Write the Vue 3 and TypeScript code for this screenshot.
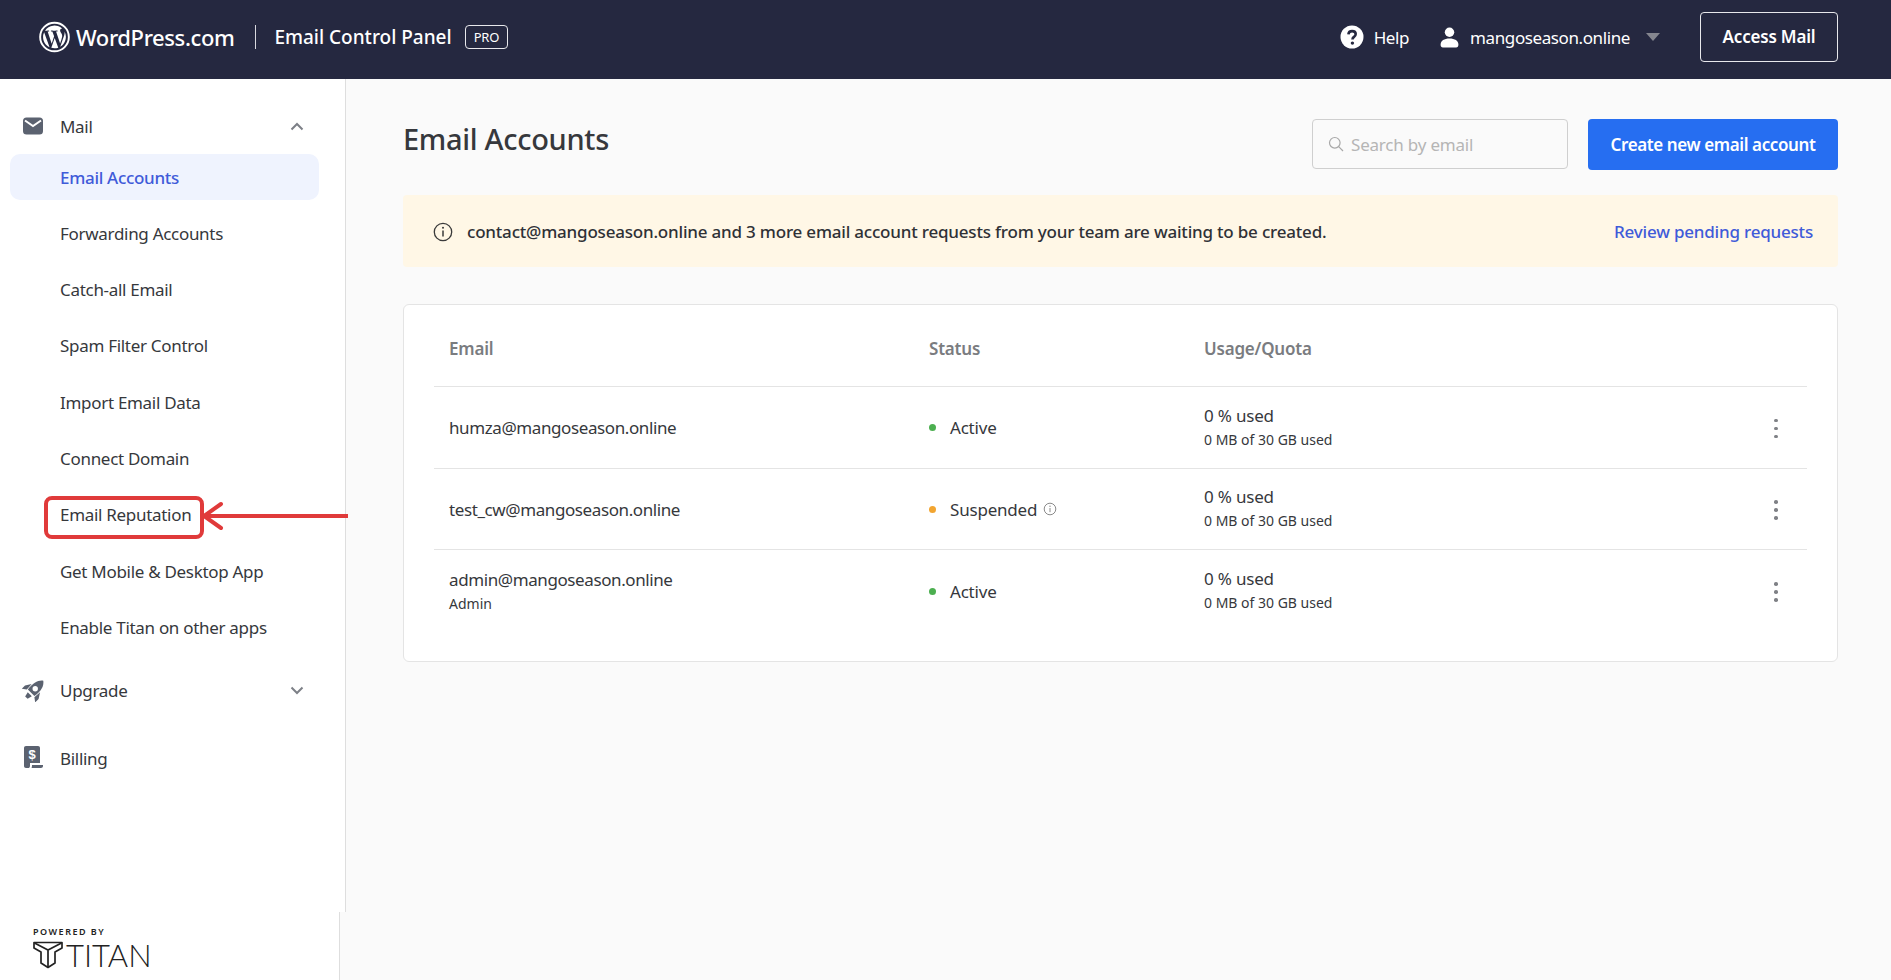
<script setup lang="ts">
interface Account {
  email: string
  role?: string
  status: string
  tone: 'ok' | 'warn'
}

const subItems = [
  'Email Accounts',
  'Forwarding Accounts',
  'Catch-all Email',
  'Spam Filter Control',
  'Import Email Data',
  'Connect Domain',
  'Email Reputation',
  'Get Mobile & Desktop App',
  'Enable Titan on other apps',
]

const accounts: Account[] = [
  { email: 'humza@mangoseason.online', status: 'Active', tone: 'ok' },
  { email: 'test_cw@mangoseason.online', status: 'Suspended', tone: 'warn' },
  { email: 'admin@mangoseason.online', role: 'Admin', status: 'Active', tone: 'ok' },
]
</script>

<template>
  <div class="page">
    <header class="topbar">
      <div class="brand">
        <svg class="wp-logo" viewBox="0 0 32 32" width="31" height="32">
          <circle cx="16" cy="16" r="14.800" fill="none" stroke="#fff" stroke-width="2" />
          <path fill="#fff" d="M4.2 16c0 4.7 2.7 8.700 6.700 10.600L5.300 11.200A11.700 11.700 0 0 0 4.200 16zm19.800-.6c0-1.500-.5-2.500-1-3.300-.6-1-1.200-1.800-1.200-2.800 0-1.100.8-2.100 2-2.100h.1A11.800 11.800 0 0 0 6.200 9.500h.8c1.200 0 3.100-.2 3.100-.2.600 0 .7.900.1 1 0 0-.6.100-1.300.1l4.200 12.500 2.500-7.600-1.800-4.900c-.6 0-1.200-.1-1.200-.1-.6 0-.5-1 .1-1 0 0 1.900.2 3 .2s3.100-.2 3.100-.2c.6 0 .7.900.1 1 0 0-.6.100-1.300.1l4.200 12.400 1.200-3.800c.5-1.600.900-2.800.900-3.800zM16.200 17l-3.500 10.200a11.800 11.800 0 0 0 7.200-.2l-.1-.2zm10.100-6.700c0 .4.100.8.100 1.200 0 1.200-.2 2.500-.9 4.200l-3.600 10.400A11.800 11.800 0 0 0 26.300 10.300z" />
        </svg>
        <span class="wp-name">WordPress.com</span>
        <span class="brand-sep"></span>
        <span class="panel-name">Email Control Panel</span>
        <span class="pro">PRO</span>
      </div>
      <div class="top-actions">
        <span class="top-link">
          <svg viewBox="0 0 24 24" width="24" height="24">
            <circle cx="12" cy="12" r="11.500" fill="#fff" />
            <path d="M8.400 9.300c.2-2 1.700-3.200 3.700-3.200 2.100 0 3.600 1.200 3.600 3 0 1.300-.7 2.100-1.700 2.800-1 .7-1.500 1.200-1.500 2.300v.4" fill="none" stroke="#252840" stroke-width="2.600" />
            <circle cx="12.400" cy="18.100" r="1.700" fill="#252840" />
          </svg>
          Help
        </span>
        <span class="top-link account">
          <svg viewBox="0 0 20 20" width="21" height="21">
            <circle cx="10" cy="5" r="4.500" fill="#fff" />
            <path fill="#fff" d="M1.500 17c0-4 3.500-6 8.500-6s8.500 2 8.500 6c0 1.600-.8 2.500-2.200 2.500H3.700c-1.400 0-2.200-.9-2.200-2.500z" />
          </svg>
          mangoseason.online
          <span class="caret"></span>
        </span>
        <button class="access-btn">Access Mail</button>
      </div>
    </header>

    <div class="body">
      <aside class="sidebar">
        <nav class="nav">
          <div class="nav-group">
            <svg class="nav-icon" viewBox="0 0 20 18" width="20" height="18">
              <rect y="0.500" width="20" height="17" rx="3.500" fill="#5b6270" />
              <path d="M2 3.500l8 5.500 8-5.500" fill="none" stroke="#fff" stroke-width="2" />
            </svg>
            <span>Mail</span>
            <svg class="chev" viewBox="0 0 14 9" width="14" height="9">
              <path d="M1.500 7.500L7 2l5.500 5.500" fill="none" stroke="#7d8087" stroke-width="2" />
            </svg>
          </div>
          <ul class="sub">
            <li v-for="(item, i) in subItems" :key="item" :class="{ active: i === 0 }">
              <span class="sub-label">
                {{ item }}
                <template v-if="item === 'Email Reputation'">
                  <span class="mark-box"></span>
                  <svg class="mark-arrow" viewBox="0 0 150 30" width="150" height="30">
                    <path d="M4 15h144" stroke="#e03a3a" stroke-width="4" fill="none" />
                    <path d="M21 3L4 15l17 12" stroke="#e03a3a" stroke-width="4" fill="none" stroke-linecap="round" />
                  </svg>
                </template>
              </span>
            </li>
          </ul>
          <div class="nav-group upgrade">
            <svg class="nav-icon rocket" viewBox="0 0 24 24" width="23" height="23">
              <g transform="rotate(45 12 12)" fill="#5b6270">
                <path d="M12-2.500C16.500 1 18 6.500 16.800 15.500H7.200C6 6.500 7.500 1 12-2.500z" />
                <path d="M5.800 8.500L2 14.500v5l4.400-3.200zM18.200 8.500L22 14.500v5l-4.400-3.200z" />
                <path d="M9 17.500h6l-1.200 5h-3.600z" />
              </g>
              <circle cx="13.800" cy="10.200" r="2.800" fill="#fff" />
            </svg>
            <span>Upgrade</span>
            <svg class="chev" viewBox="0 0 14 9" width="14" height="9">
              <path d="M1.500 1.500L7 7l5.500-5.500" fill="none" stroke="#7d8087" stroke-width="2" />
            </svg>
          </div>
          <div class="nav-group billing">
            <svg class="nav-icon" viewBox="0 0 20 24" width="20" height="24">
              <path fill="#5b6270" d="M3 0h12c1.200 0 2 .8 2 2v15H7v3c0 .8-.3 1.500-1 2H3c-1.200 0-2-.8-2-2V2c0-1.200.8-2 2-2zM9 19h11v1c0 1.200-.8 2-2 2H8.500c.4-.8.500-1.500.5-3z" />
              <text x="9" y="13" font-size="13" font-weight="700" fill="#fff" text-anchor="middle" font-family="Liberation Sans, sans-serif">$</text>
            </svg>
            <span>Billing</span>
          </div>
        </nav>
      </aside>

      <main class="main">
        <div class="main-head">
          <h1>Email Accounts</h1>
          <div class="main-tools">
            <div class="search">
              <svg viewBox="0 0 16 16" width="16" height="16">
                <circle cx="6.800" cy="6.800" r="5.300" fill="none" stroke="#a8a8a8" stroke-width="1.200" />
                <path d="M10.700 10.700l4.300 4.300" stroke="#a8a8a8" stroke-width="1.200" />
              </svg>
              <span>Search by email</span>
            </div>
            <button class="create-btn">Create new email account</button>
          </div>
        </div>

        <div class="notice">
          <svg viewBox="0 0 20 20" width="20" height="20">
            <circle cx="10" cy="10" r="8.700" fill="none" stroke="#3a3a3a" stroke-width="1.300" />
            <path d="M10 8.500v6" stroke="#3a3a3a" stroke-width="1.500" />
            <circle cx="10" cy="5.800" r="1" fill="#3a3a3a" />
          </svg>
          <span class="notice-text">contact@mangoseason.online and 3 more email account requests from your team are waiting to be created.</span>
          <a class="notice-link">Review pending requests</a>
        </div>

        <section class="card">
          <div class="row head">
            <div>Email</div>
            <div>Status</div>
            <div>Usage/Quota</div>
          </div>
          <div v-for="acc in accounts" :key="acc.email" class="row">
            <div :class="{ solo: !acc.role }">
              <div class="cell-main email">{{ acc.email }}</div>
              <div v-if="acc.role" class="cell-sub">{{ acc.role }}</div>
            </div>
            <div class="status">
              <span class="dot" :class="acc.tone"></span>
              {{ acc.status }}
              <svg v-if="acc.tone === 'warn'" viewBox="0 0 14 14" width="14" height="14">
                <circle cx="7" cy="7" r="5.800" fill="none" stroke="#8a8a8a" stroke-width="1" />
                <path d="M7 6v4.200" stroke="#8a8a8a" stroke-width="1" />
                <circle cx="7" cy="4.200" r=".7" fill="#8a8a8a" />
              </svg>
            </div>
            <div class="usage">
              <div class="cell-main">0 % used</div>
              <div class="cell-sub">0 MB of 30 GB used</div>
            </div>
            <div class="kebab"><i></i><i></i><i></i></div>
          </div>
        </section>
      </main>
    </div>

    <footer class="powered">
      <div class="powered-label">POWERED BY</div>
      <div class="titan">
        <svg viewBox="0 0 30 28" width="30" height="28">
          <path d="M1 1.500h28v5.500l-7 4v11l-7 4.500-7-4.500V11L1 7z" fill="none" stroke="#222" stroke-width="1.700" stroke-linejoin="round" />
          <path d="M1.500 2L15 9l13.500-7M15 9v17" fill="none" stroke="#222" stroke-width="1.700" />
        </svg>
        <span>TITAN</span>
      </div>
    </footer>
  </div>
</template>

<style scoped>
.page {
  position: relative;
  width: 1891px;
  height: 980px;
  overflow: hidden;
  display: flex;
  flex-direction: column;
  background: #fafafa;
  color: #36383c;
  font-family: "Noto Sans", "Open Sans", sans-serif;
  font-size: 17px;
  letter-spacing: -0.2px;
}

.topbar {
  flex: none;
  height: 79px;
  box-sizing: border-box;
  display: flex;
  align-items: center;
  justify-content: space-between;
  padding: 0 53px 5px 39px;
  background: #252840;
  color: #fff;
}

.brand,
.top-actions,
.top-link {
  display: flex;
  align-items: center;
}

.wp-name {
  margin-left: 6px;
  font-size: 22px;
  font-weight: 500;
  letter-spacing: -0.4px;
}

.brand-sep {
  width: 1px;
  height: 24px;
  margin: 0 18px 0 21px;
  background: #d8d8de;
}

.panel-name {
  font-size: 19px;
  font-weight: 500;
  letter-spacing: 0;
}

.pro {
  margin-left: 13px;
  padding: 2px 8px;
  border: 1px solid #e8e8ec;
  border-radius: 4px;
  font-size: 13px;
  line-height: 18px;
}

.top-link {
  gap: 10px;
  font-size: 17px;
  letter-spacing: -0.4px;
}

.account {
  margin-left: 30px;
}

.caret {
  width: 0;
  height: 0;
  margin-left: 6px;
  border-left: 7px solid transparent;
  border-right: 7px solid transparent;
  border-top: 8px solid #85868f;
}

.access-btn {
  width: 138px;
  height: 50px;
  margin-left: 40px;
  padding-bottom: 3px;
  border: 1px solid #e8e8ec;
  border-radius: 4px;
  background: transparent;
  color: #fff;
  font: 600 17px "Noto Sans", sans-serif;
  letter-spacing: -0.2px;
}

.body {
  flex: 1;
  min-height: 0;
  display: flex;
  align-items: flex-start;
}

.sidebar {
  flex: none;
  width: 346px;
  height: 833px;
  box-sizing: border-box;
  background: #fff;
  border-right: 1px solid #dedede;
  letter-spacing: -0.3px;
}

.nav {
  padding: 30px 41px 0 10px;
}

.nav-group {
  display: flex;
  align-items: center;
  height: 34px;
  padding-left: 13px;
}

.nav-group > span {
  margin-left: 17px;
}

.nav-icon {
  flex: none;
  width: 20px;
}

.nav-icon.rocket {
  width: 23px;
  margin: 0 -2px 0 -1px;
}

.chev {
  margin-left: auto;
}

.sub {
  margin: 11px -15px 0 0;
  padding: 0;
  list-style: none;
}

.sub li {
  display: flex;
  align-items: center;
  height: 46px;
  margin-bottom: 10.300px;
  padding-left: 50px;
  border-radius: 10px;
}

.sub li.active {
  background: #eff3fe;
  color: #3f5bd9;
  font-weight: 500;
}

.sub-label {
  position: relative;
  white-space: nowrap;
}

.mark-box {
  position: absolute;
  left: -16px;
  right: -13px;
  top: -7px;
  bottom: -13px;
  border: 4px solid #e03a3a;
  border-radius: 8px;
}

.mark-arrow {
  position: absolute;
  left: 140px;
  top: -2px;
}

.upgrade {
  margin-top: 23px;
}

.billing {
  margin-top: 34px;
}

.main {
  flex: 1;
  min-width: 0;
  padding: 40px 53px 0 57px;
}

.main-head {
  display: flex;
  align-items: flex-start;
  justify-content: space-between;
}

h1 {
  margin: -1px 0 0;
  font-size: 29px;
  font-weight: 500;
  line-height: 42px;
  letter-spacing: -0.3px;
  color: #36383c;
}

.main-tools {
  display: flex;
  gap: 20px;
}

.search {
  display: flex;
  align-items: center;
  gap: 7px;
  width: 256px;
  height: 50px;
  box-sizing: border-box;
  padding-left: 15px;
  border: 1px solid #cfcfcf;
  border-radius: 4px;
  color: #b5b5b5;
  font-size: 17px;
}

.create-btn {
  width: 250px;
  height: 51px;
  border: 0;
  border-radius: 4px;
  background: #266ef1;
  color: #fff;
  font: 600 17px "Noto Sans", sans-serif;
  letter-spacing: -0.4px;
}

.notice {
  display: flex;
  align-items: center;
  height: 72px;
  margin-top: 25px;
  padding: 1px 25px 0 30px;
  border-radius: 4px;
  background: #fff7e6;
  box-sizing: border-box;
}

.notice-text {
  margin-left: 14px;
  font-weight: 500;
  color: #2f3136;
}

.notice-link {
  margin-left: auto;
  color: #3f5bd9;
  font-weight: 500;
}

.card {
  margin-top: 37px;
  height: 358px;
  box-sizing: border-box;
  padding: 0 30px;
  border: 1px solid #e4e4e4;
  border-radius: 6px;
  background: #fff;
}

.row {
  display: grid;
  grid-template-columns: 480px 275px 1fr 62px;
  align-items: center;
  box-sizing: border-box;
  height: 81.500px;
  padding-left: 15px;
  border-bottom: 1px solid #e4e4e4;
}

.row:last-child {
  border-bottom: 0;
}

.row.head {
  height: 82px;
  padding-top: 5px;
  color: #7a7c80;
  font-weight: 600;
}

.solo {
  padding-top: 2px;
}

.usage {
  padding-bottom: 1px;
}

.cell-sub {
  margin-top: 2px;
  font-size: 14px;
  line-height: 20px;
  letter-spacing: 0;
}

.cell-main {
  line-height: 24px;
}

.email {
  letter-spacing: -0.4px;
}

.status {
  display: flex;
  align-items: center;
  gap: 6px;
  padding-top: 1px;
}

.dot {
  width: 7px;
  height: 7px;
  margin-right: 8px;
  border-radius: 50%;
}

.dot.ok {
  background: #4caf50;
}

.dot.warn {
  background: #f2a531;
}

.kebab {
  display: flex;
  flex-direction: column;
  align-items: center;
  gap: 4.500px;
  padding-top: 2px;
}

.kebab i {
  width: 3.500px;
  height: 3.500px;
  border-radius: 50%;
  background: #7f8186;
}

.powered {
  position: absolute;
  left: 0;
  bottom: 0;
  width: 340px;
  height: 68px;
  box-sizing: border-box;
  padding: 13px 0 0 33px;
  background: #fff;
  border-right: 1px solid #dedede;
}

.powered-label {
  font-size: 9px;
  font-weight: 600;
  letter-spacing: 1.500px;
  line-height: 13px;
  color: #222;
}

.titan {
  display: flex;
  align-items: center;
  gap: 3px;
  color: #222;
}

.titan span {
  font-family: "Lato", sans-serif;
  font-size: 31px;
  font-weight: 300;
  line-height: 34px;
  letter-spacing: 0;
}
</style>
